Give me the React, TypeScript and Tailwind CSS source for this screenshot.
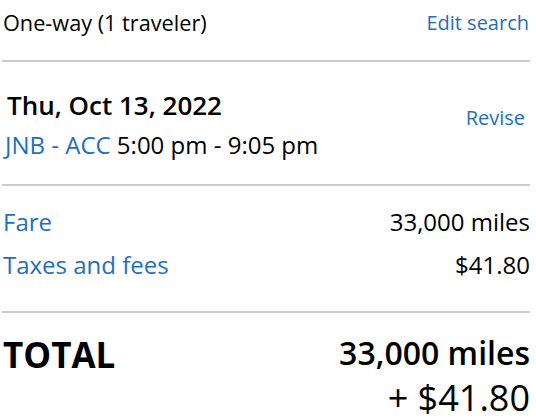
export default function App() {
  return (
    <div className="w-[536px] h-[418px] overflow-hidden bg-white text-black font-['Open_Sans',sans-serif]">
      <div className="flex items-center justify-between pl-[3px] pr-[7px] h-[60px] pb-[14px]">
        <span className="text-[21.7px]">One-way (1 traveler)</span>
        <a className="text-[20px] text-[#1f6fc0]">Edit search</a>
      </div>
      <div className="ml-[2px] mr-[6px] h-[2px] bg-[#cccccc]" />
      <div className="flex justify-between pl-[5px] pr-[11px] pt-[23px] pb-[19px]">
        <div className="flex flex-col">
          <span className="pl-[2px] text-[26px] font-semibold leading-[40px]">Thu, Oct 13, 2022</span>
          <span className="text-[24px] leading-[40px]">
            <span className="text-[#1f6fc0]">JNB - ACC</span> 5:00 pm - 9:05 pm
          </span>
        </div>
        <a className="text-[20px] leading-[28px] text-[#1f6fc0] mt-[19px]">Revise</a>
      </div>
      <div className="ml-[2px] mr-[6px] h-[2px] bg-[#cccccc]" />
      <div className="flex flex-col pl-[3px] pr-[6px] pt-[14px] pb-[25px] text-[24px] leading-[43px]">
        <div className="flex justify-between">
          <span className="text-[#1f6fc0]">Fare</span>
          <span>33,000 miles</span>
        </div>
        <div className="flex justify-between">
          <span className="text-[#1f6fc0]">Taxes and fees</span>
          <span>$41.80</span>
        </div>
      </div>
      <div className="ml-[2px] mr-[6px] h-[2px] bg-[#cccccc]" />
      <div className="flex justify-between pl-[3px] pr-[6px] pt-[20px]">
        <span className="text-[35px] font-bold leading-[44px]">TOTAL</span>
        <div className="flex flex-col items-end">
          <span className="text-[32px] font-semibold leading-[40px]">33,000 miles</span>
          <span className="text-[36px] leading-[50px]">+ $41.80</span>
        </div>
      </div>
    </div>
  );
}
